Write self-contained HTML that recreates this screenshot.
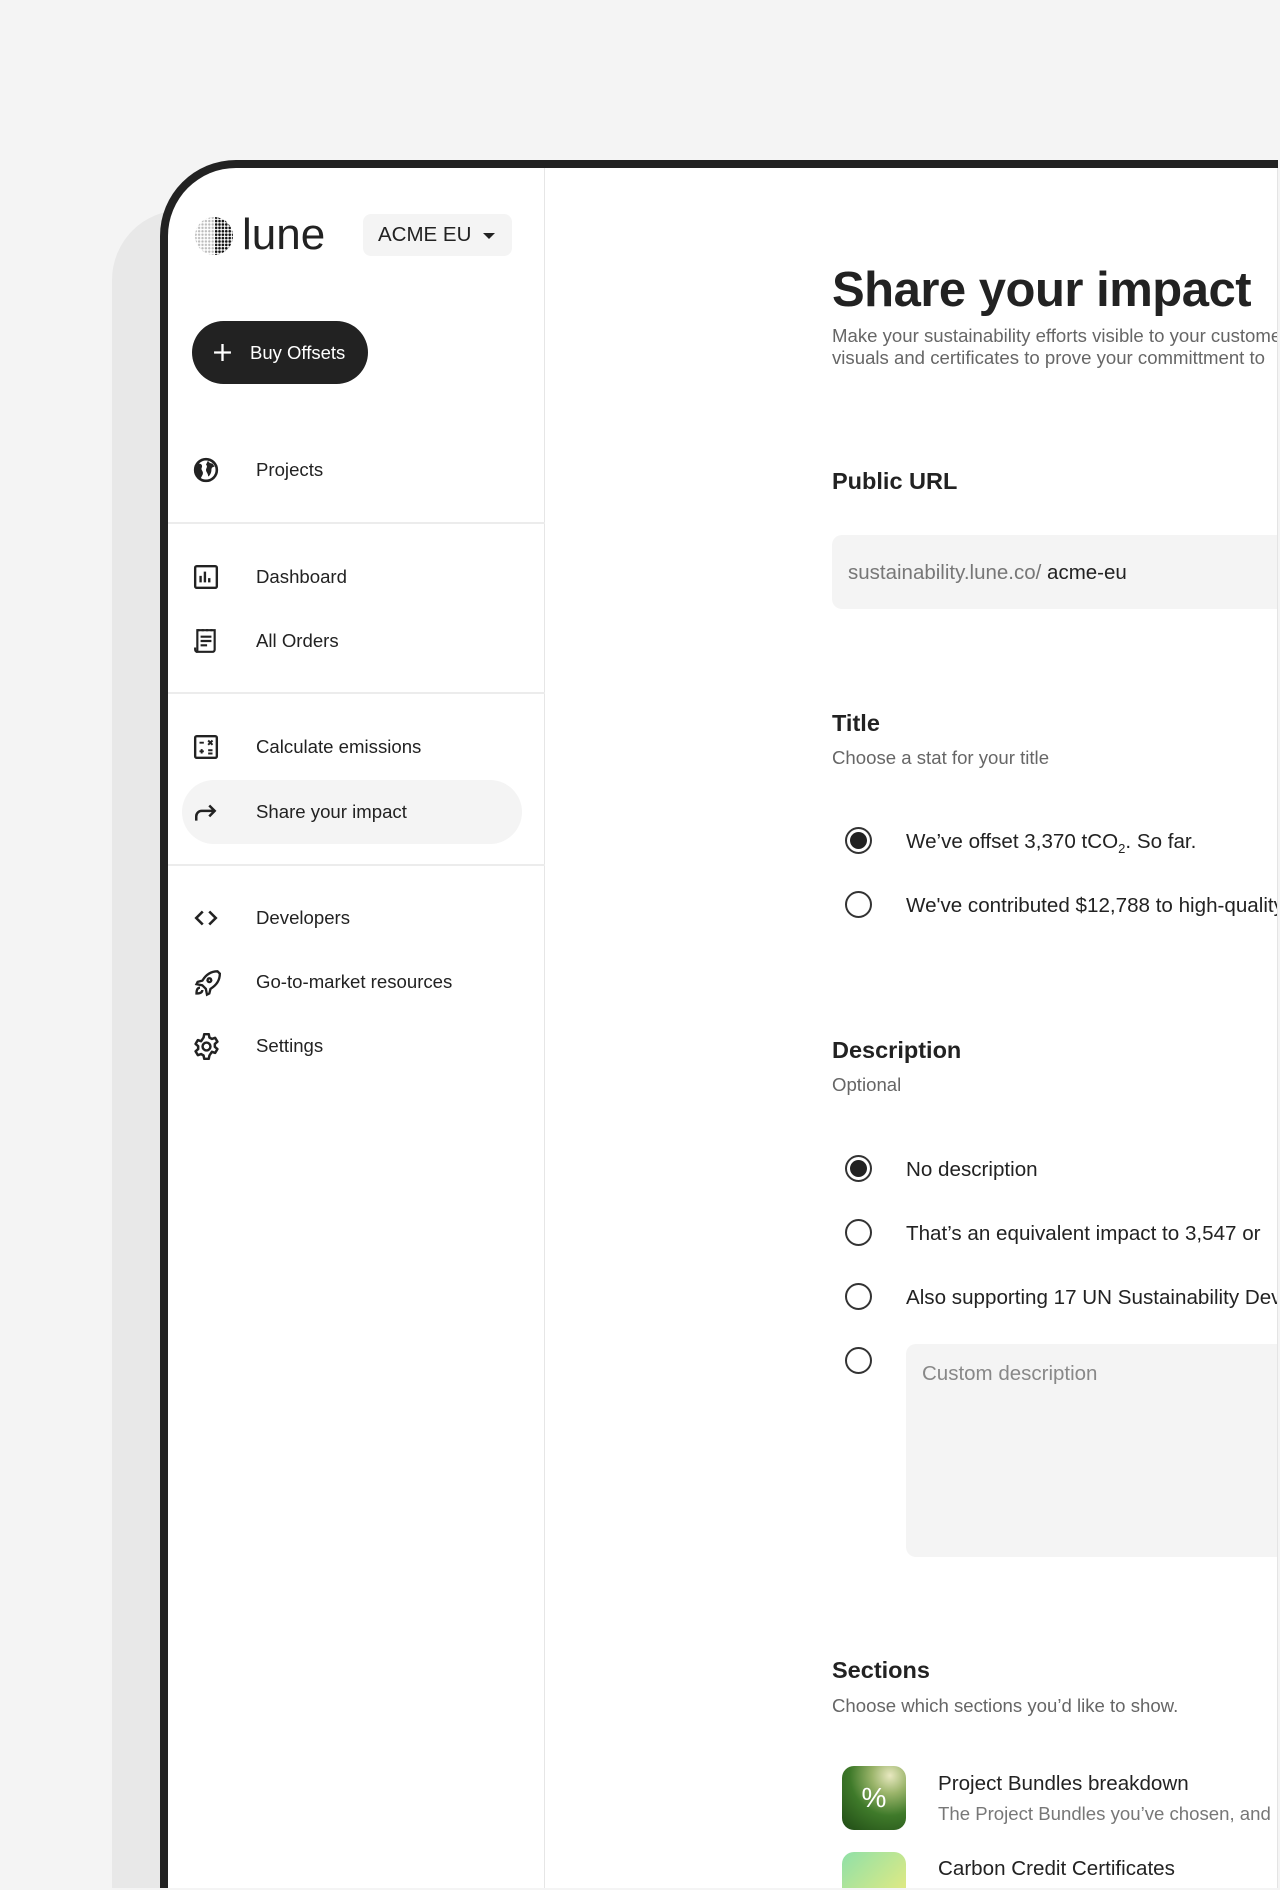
<!DOCTYPE html>
<html><head><meta charset="utf-8"><style>
*{box-sizing:border-box;margin:0;padding:0}
body{width:1280px;height:1890px;background:#f4f4f4;font-family:"Liberation Sans",Arial,sans-serif;color:#222;position:relative;overflow:hidden}
.shadow{position:absolute;left:112px;top:210px;width:400px;height:1678px;background:#e8e8e8;border-top-left-radius:70px}
.frame{position:absolute;left:160px;top:160px;width:1118px;height:1728px;background:#222;border-top-left-radius:76px;overflow:hidden}
.inner{position:absolute;left:8px;top:8px;right:0;bottom:0;background:#fff;border-top-left-radius:68px;overflow:hidden;border-right:1px solid #e4e4e4}
.side{position:absolute;left:0;top:0;width:377px;height:100%;border-right:1px solid #e6e6e6}
.abs{position:absolute}
.nav{position:absolute;left:0;width:377px;height:40px;display:flex;align-items:center;font-size:18.6px;color:#222}
.nav svg{position:absolute;left:25px;top:7px}
.nav span{position:absolute;left:88px}
.div{position:absolute;left:0;width:377px;height:2px;background:#ececec}
.h2{position:absolute;left:664px;font-size:23.5px;font-weight:bold;color:#222}
.sub{position:absolute;left:664px;font-size:18.6px;color:#666}
.radio{position:absolute;left:677px;width:27px;height:27px;border:2px solid #333;border-radius:50%}
.radio.on::after{content:"";position:absolute;left:3px;top:3px;width:17px;height:17px;border-radius:50%;background:#222}
.opt{position:absolute;left:738px;font-size:20.6px;color:#222;white-space:nowrap}
</style></head><body>
<div class="shadow"></div>
<div class="frame"><div class="inner">
 <div class="side">
  <svg class="abs" style="left:26px;top:48px" width="40" height="40" viewBox="0 0 40 40">
   <defs>
    <pattern id="d" width="3.4" height="3.4" patternUnits="userSpaceOnUse"><circle cx="1.7" cy="1.7" r="1.2" fill="#bbb"/></pattern>
    <pattern id="k" width="3.4" height="3.4" patternUnits="userSpaceOnUse"><circle cx="1.7" cy="1.7" r="1.3" fill="#111"/></pattern>
    <clipPath id="c"><circle cx="20" cy="20" r="19"/></clipPath>
   </defs>
   <rect width="40" height="40" fill="url(#d)" clip-path="url(#c)"/>
   <rect x="21" width="19" height="40" fill="url(#k)" clip-path="url(#c)"/>
  </svg>
  <div class="abs" style="left:74px;top:42px;font-size:44px;color:#222;letter-spacing:0px;font-weight:300">lune</div>
  <div class="abs" style="left:195px;top:46px;width:149px;height:42px;background:#f4f4f4;border-radius:8px;font-size:20.5px;line-height:42px;padding-left:15px;color:#222">ACME EU <span style="display:inline-block;margin-left:6px;border-left:6px solid transparent;border-right:6px solid transparent;border-top:6px solid #222;vertical-align:middle"></span></div>
  <div class="abs" style="left:24px;top:153px;width:176px;height:63px;background:#222;border-radius:32px;color:#fff;font-size:18.5px;line-height:63px;padding-left:58px">Buy Offsets
   <svg class="abs" style="left:21px;top:22px" width="19" height="19" viewBox="0 0 18 18"><path d="M9 1v16M1 9h16" stroke="#fff" stroke-width="2.2"/></svg></div>

  <div class="nav" style="top:282px"><svg width="26" height="26" viewBox="0 0 24 24"><circle cx="12" cy="12" r="10" fill="none" stroke="#222" stroke-width="2.4"/><path d="M5 6c3 0 4 2 3 4s2 3 1 6l-2 4c-3-1-5-4-5-8z M14 3c0 2 2 3 4 3l2 3c-2 0-3 1-3 3s-1 5-3 6c0-3-2-4-2-6s2-3 0-5z" fill="#222"/></svg><span>Projects</span></div>
  <div class="div" style="top:354px"></div>
  <div class="nav" style="top:389px"><svg width="26" height="26" viewBox="0 0 24 24"><rect x="2" y="2" width="20" height="20" rx="1.5" fill="none" stroke="#222" stroke-width="2.2"/><path d="M7 17v-6M11 17V7M15 17v-4" stroke="#222" stroke-width="2.2"/></svg><span>Dashboard</span></div>
  <div class="nav" style="top:453px"><svg width="26" height="26" viewBox="0 0 24 24"><path d="M4 2h16v18a2 2 0 0 1-2 2H4z" fill="none" stroke="#222" stroke-width="2"/><path d="M4 2h2M8 2h2M12 2h2M16 2h2M7 8h10M7 12h10M7 16h6M2 18v2a2 2 0 0 0 2 2" stroke="#222" stroke-width="2" fill="none"/></svg><span>All Orders</span></div>
  <div class="div" style="top:524px"></div>
  <div class="nav" style="top:559px"><svg width="26" height="26" viewBox="0 0 24 24"><rect x="2" y="2" width="20" height="20" rx="1.5" fill="none" stroke="#222" stroke-width="2.2"/><path d="M6 8h4M14 6l4 4M18 6l-4 4M6 16h4M8 14v4M14 15h4M14 18h4" stroke="#222" stroke-width="1.8"/></svg><span>Calculate emissions</span></div>
  <div class="abs" style="left:14px;top:612px;width:340px;height:64px;background:#f4f4f4;border-radius:32px"></div>
  <div class="nav" style="top:624px"><svg width="26" height="26" viewBox="0 0 24 24"><path d="M3 20v-4a5 5 0 0 1 5-5h12M15 6l5 5-5 5" fill="none" stroke="#222" stroke-width="2.3"/></svg><span>Share your impact</span></div>
  <div class="div" style="top:696px"></div>
  <div class="nav" style="top:730px"><svg width="26" height="26" viewBox="0 0 24 24"><path d="M9 6l-6 6 6 6M15 6l6 6-6 6" fill="none" stroke="#222" stroke-width="2.4"/></svg><span>Developers</span></div>
  <div class="nav" style="top:794px"><svg width="28" height="28" viewBox="0 0 24 24"><path d="M21 2c-6 0-10 3-13 8l-4 1 -1 2 5 1 3 3 1 5 2-1 1-4c5-3 8-7 8-13z M14 8a1.6 1.6 0 1 0 .1 0z" fill="none" stroke="#222" stroke-width="2"/><path d="M6 16c-2 0-3 2-3 5 3 0 5-1 5-3" fill="none" stroke="#222" stroke-width="2"/></svg><span>Go-to-market resources</span></div>
  <div class="nav" style="top:858px"><svg width="27" height="27" viewBox="0 0 24 24"><path d="M10 1h4l.6 3 2.2 1.3 2.9-1 2 3.4-2.3 2 v2.6l2.3 2-2 3.4-2.9-1L14.6 20 14 23h-4l-.6-3-2.2-1.3-2.9 1-2-3.4 2.3-2v-2.6l-2.3-2 2-3.4 2.9 1L9.4 4z" fill="none" stroke="#222" stroke-width="2.2" stroke-linejoin="round"/><circle cx="12" cy="12" r="3.5" fill="none" stroke="#222" stroke-width="2.2"/></svg><span>Settings</span></div>
 </div>

 <div class="abs" style="left:664px;top:94px;font-size:49px;font-weight:bold;color:#222;white-space:nowrap;letter-spacing:-0.5px">Share your impact</div>
 <div class="sub" style="top:157px;line-height:22px;white-space:nowrap">Make your sustainability efforts visible to your customers<br>visuals and certificates to prove your committment to</div>

 <div class="h2" style="top:300px">Public URL</div>
 <div class="abs" style="left:664px;top:367px;width:600px;height:74px;background:#f4f4f4;border-radius:10px;font-size:20.5px;line-height:76px;padding-left:16px;color:#777">sustainability.lune.co/ <span style="color:#222">acme-eu</span></div>

 <div class="h2" style="top:542px">Title</div>
 <div class="sub" style="top:579px">Choose a stat for your title</div>
 <div class="radio on" style="top:659px"></div><div class="opt" style="top:662px">We’ve offset 3,370 tCO<sub style="font-size:13px">2</sub>. So far.</div>
 <div class="radio" style="top:723px"></div><div class="opt" style="top:726px">We've contributed $12,788 to high-quality</div>

 <div class="h2" style="top:869px">Description</div>
 <div class="sub" style="top:906px">Optional</div>
 <div class="radio on" style="top:987px"></div><div class="opt" style="top:990px">No description</div>
 <div class="radio" style="top:1051px"></div><div class="opt" style="top:1054px">That’s an equivalent impact to 3,547 or</div>
 <div class="radio" style="top:1115px"></div><div class="opt" style="top:1118px">Also supporting 17 UN Sustainability Development</div>
 <div class="radio" style="top:1179px"></div>
 <div class="abs" style="left:738px;top:1176px;width:500px;height:213px;background:#f4f4f4;border-radius:10px;font-size:20.5px;color:#888;padding:18px 16px">Custom description</div>

 <div class="h2" style="top:1489px">Sections</div>
 <div class="sub" style="top:1527px">Choose which sections you’d like to show.</div>
 <div class="abs" style="left:674px;top:1598px;width:64px;height:64px;border-radius:12px;background:radial-gradient(circle at 75% 15%,#e8e8c0 0,#9ab46a 25%,#3f7a2a 55%,#1f4a15 100%);color:#fff;font-size:28px;text-align:center;line-height:64px">%</div>
 <div class="opt" style="left:770px;top:1604px">Project Bundles breakdown</div>
 <div class="opt" style="left:770px;top:1635px;font-size:18.6px;color:#777">The Project Bundles you’ve chosen, and</div>
 <div class="abs" style="left:674px;top:1684px;width:64px;height:64px;border-radius:12px;background:linear-gradient(135deg,#8fe0a8,#f4ec7a)"></div>
 <div class="opt" style="left:770px;top:1689px">Carbon Credit Certificates</div>
</div></div>
</body></html>
